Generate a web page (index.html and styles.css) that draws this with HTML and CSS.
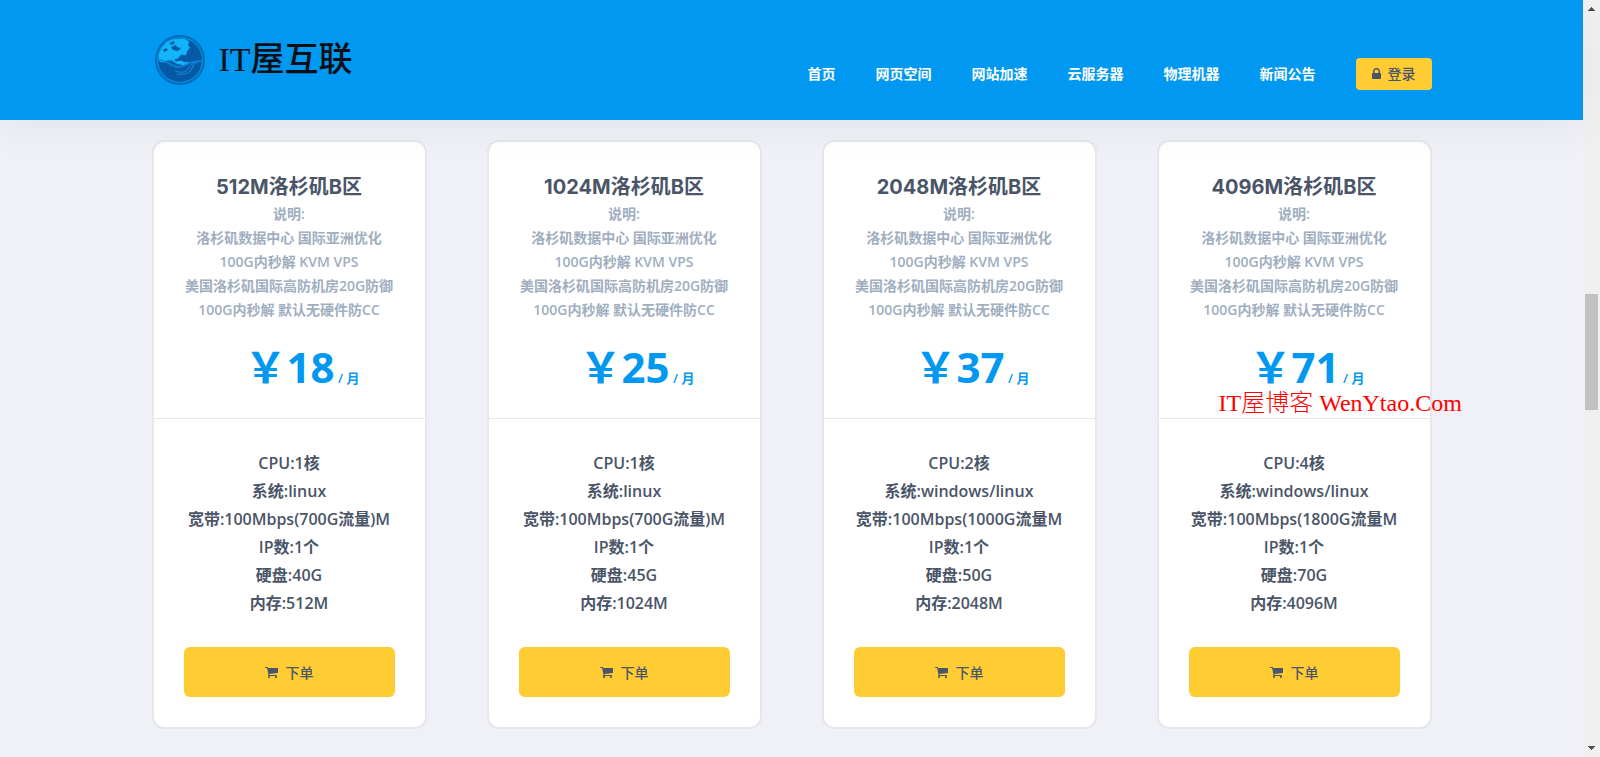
FILE: index.html
```html
<!DOCTYPE html>
<html lang="zh-CN">
<head>
    <meta charset="UTF-8">
    <meta name="viewport" content="width=device-width, initial-scale=1.0">
    <title>IT屋互联</title>
    <link rel="stylesheet" href="styles.css">
</head>
<body>
    <svg class="icon-defs" aria-hidden="true">
        <symbol id="icon-cart" viewBox="0 0 1664 1792">
            <path d="M640 1536q0 52-38 90t-90 38-90-38-38-90 38-90 90-38 90 38 38 90zm896 0q0 52-38 90t-90 38-90-38-38-90 38-90 90-38 90 38 38 90zm128-1088v512q0 24-16.500 42.500t-40.500 21.500l-1044 122q13 60 13 70 0 16-24 64h920q26 0 45 19t19 45-19 45-45 19h-1024q-26 0-45-19t-19-45q0-11 8-31.500t16-36 21.500-40 15.500-29.500l-177-823h-204q-26 0-45-19t-19-45 19-45 45-19h256q16 0 28.500 6.500t19.500 15.500 13 24.500 8 26 5.500 29.500 4.500 26h1201q26 0 45 19t19 45z"/>
        </symbol>
        <symbol id="icon-lock" viewBox="320 0 1152 1792">
            <path d="M640 768h512v-192q0-106-75-181t-181-75-181 75-75 181v192zm832 96v576q0 40-28 68t-68 28h-960q-40 0-68-28t-28-68v-576q0-40 28-68t68-28h32v-192q0-184 132-316t316-132 316 132 132 316v192h32q40 0 68 28t28 68z"/>
        </symbol>
    </svg>

    <div class="page">
        <header class="header">
            <div class="container header-inner">
                <a class="logo" href="#">
                    <svg class="logo-mark" viewBox="0 0 50 50" aria-hidden="true">
                        <circle cx="25" cy="25" r="24" fill="#0098f0" stroke="#0569b4" stroke-width="2"/>
                        <circle cx="25" cy="25" r="22" fill="#0559a5"/>
                        <path d="M3.500 23C4 13 12 5 20 4L29 3.500l5 3-1 4 2 2-3 4-1 4-5-1-3 4-4 1 2 2 5-1 4 2 3-1 1 2-4 2-5-1-4-1-4-3-5 0-4 2-4-1z" fill="#12b4fa"/>
                        <path d="M14 9l4-3 2 1-2 3zM8 15l3-2 2 2-4 2zM16 12l5-2 1 2 4 1-3 3-5-1z" fill="#0559a5"/>
                        <path d="M4 25c8 0 12 7 20 7 6 0 8-6 23-6" fill="none" stroke="#0c86dc" stroke-width="1.500"/>
                        <path d="M20 36c5 2 11 2 13-2 1-3 4-6 9-7M21 39c8 1 12 0 15-4 1-3 2-5 5-7M33 38c3-2 5-5 6-9" fill="none" stroke="#1689dc" stroke-width="1"/>
                    </svg>
                    <span class="logo-text">IT屋互联</span>
                </a>
                <nav class="nav">
                    <a href="#">首页</a>
                    <a href="#">网页空间</a>
                    <a href="#">网站加速</a>
                    <a href="#">云服务器</a>
                    <a href="#">物理机器</a>
                    <a href="#">新闻公告</a>
                    <a class="btn btn-login" href="#"><svg class="icon-lock"><use href="#icon-lock"/></svg>登录</a>
                </nav>
            </div>
        </header>

        <main class="container plans">
            <section class="card">
                <div class="card-head">
                    <h3>512M洛杉矶B区</h3>
                    <p>说明:<br>洛杉矶数据中心 国际亚洲优化<br>100G内秒解 KVM VPS<br>美国洛杉矶国际高防机房20G防御<br>100G内秒解 默认无硬件防CC</p>
                    <div class="price">￥18<span> / 月</span></div>
                </div>
                <div class="card-body">
                    <ul>
                        <li>CPU:1核</li>
                        <li>系统:linux</li>
                        <li>宽带:100Mbps(700G流量)M</li>
                        <li>IP数:1个</li>
                        <li>硬盘:40G</li>
                        <li>内存:512M</li>
                    </ul>
                    <button class="btn btn-order" type="button"><svg class="icon-cart"><use href="#icon-cart"/></svg>下单</button>
                </div>
            </section>

            <section class="card">
                <div class="card-head">
                    <h3>1024M洛杉矶B区</h3>
                    <p>说明:<br>洛杉矶数据中心 国际亚洲优化<br>100G内秒解 KVM VPS<br>美国洛杉矶国际高防机房20G防御<br>100G内秒解 默认无硬件防CC</p>
                    <div class="price">￥25<span> / 月</span></div>
                </div>
                <div class="card-body">
                    <ul>
                        <li>CPU:1核</li>
                        <li>系统:linux</li>
                        <li>宽带:100Mbps(700G流量)M</li>
                        <li>IP数:1个</li>
                        <li>硬盘:45G</li>
                        <li>内存:1024M</li>
                    </ul>
                    <button class="btn btn-order" type="button"><svg class="icon-cart"><use href="#icon-cart"/></svg>下单</button>
                </div>
            </section>

            <section class="card">
                <div class="card-head">
                    <h3>2048M洛杉矶B区</h3>
                    <p>说明:<br>洛杉矶数据中心 国际亚洲优化<br>100G内秒解 KVM VPS<br>美国洛杉矶国际高防机房20G防御<br>100G内秒解 默认无硬件防CC</p>
                    <div class="price">￥37<span> / 月</span></div>
                </div>
                <div class="card-body">
                    <ul>
                        <li>CPU:2核</li>
                        <li>系统:windows/linux</li>
                        <li>宽带:100Mbps(1000G流量M</li>
                        <li>IP数:1个</li>
                        <li>硬盘:50G</li>
                        <li>内存:2048M</li>
                    </ul>
                    <button class="btn btn-order" type="button"><svg class="icon-cart"><use href="#icon-cart"/></svg>下单</button>
                </div>
            </section>

            <section class="card">
                <div class="card-head">
                    <h3>4096M洛杉矶B区</h3>
                    <p>说明:<br>洛杉矶数据中心 国际亚洲优化<br>100G内秒解 KVM VPS<br>美国洛杉矶国际高防机房20G防御<br>100G内秒解 默认无硬件防CC</p>
                    <div class="price">￥71<span> / 月</span></div>
                    <div class="watermark">IT屋博客 WenYtao.Com</div>
                </div>
                <div class="card-body">
                    <ul>
                        <li>CPU:4核</li>
                        <li>系统:windows/linux</li>
                        <li>宽带:100Mbps(1800G流量M</li>
                        <li>IP数:1个</li>
                        <li>硬盘:70G</li>
                        <li>内存:4096M</li>
                    </ul>
                    <button class="btn btn-order" type="button"><svg class="icon-cart"><use href="#icon-cart"/></svg>下单</button>
                </div>
            </section>
        </main>
    </div>

    <div class="scrollbar" aria-hidden="true">
        <svg viewBox="0 0 7 4"><path d="M0 4V3h1V2h1V1h1V0h1v1h1v1h1v1h1v1z"/></svg>
        <div class="scrollbar-track"><div class="scrollbar-thumb"></div></div>
        <svg viewBox="0 0 7 4"><path d="M0 0v1h1v1h1v1h1v1h1V3h1V2h1V1h1V0z"/></svg>
    </div>
</body>
</html>
```
FILE: styles.css
```css
* {
    margin: 0;
    padding: 0;
    box-sizing: border-box;
}

body {
    display: flex;
    min-height: 100vh;
    background: #f0f1f6;
    color: #4a5568;
    font-family: 'Open Sans', 'Noto Sans CJK SC', sans-serif;
    font-size: 14px;
    font-weight: 600;
}

a {
    color: inherit;
    text-decoration: none;
}

.icon-defs {
    display: none;
}

.page {
    flex: 1;
    min-width: 0;
}

.container {
    width: 100%;
    max-width: 1340px;
    margin: 0 auto;
    padding: 0 30px;
}

/* Header */
.header {
    position: relative;
    z-index: 1;
    background: #0098f0;
    box-shadow: 0 10px 40px rgba(0, 0, 0, 0.05);
}

.header-inner {
    display: flex;
    align-items: center;
    justify-content: space-between;
    height: 120px;
}

.logo {
    display: flex;
    align-items: center;
    gap: 14px;
    padding-left: 3px;
}

.logo-mark {
    width: 50px;
    height: 50px;
}

.logo-text {
    color: #0a0f14;
    font-family: 'Liberation Serif', 'Noto Sans CJK SC', serif;
    font-size: 34px;
    font-weight: 500;
    line-height: 40px;
}

.nav {
    display: flex;
    align-items: center;
    gap: 40px;
    padding-top: 28px;
    color: #fff;
    font-weight: 700;
    line-height: 20px;
}

.btn {
    display: flex;
    align-items: center;
    justify-content: center;
    border: none;
    background: #ffcc33;
    color: #4a5568;
    font: inherit;
    font-weight: 500;
    cursor: pointer;
}

.btn svg {
    height: 14px;
    fill: currentColor;
}

.btn-login {
    gap: 7px;
    height: 32px;
    padding: 0 16px;
    border-radius: 4px;
}

.icon-lock {
    width: 9px;
}

.icon-cart {
    width: 13px;
}

/* Plans */
.plans {
    display: grid;
    grid-template-columns: repeat(4, 1fr);
    gap: 60px;
    padding-top: 20px;
    padding-bottom: 20px;
}

.card {
    border: 2px solid #e5e7ee;
    border-radius: 12px;
    background: #fff;
    text-align: center;
}

.card-head {
    position: relative;
    padding: 30px 0;
    border-bottom: 1px solid #e5e7ee;
}

.card-head h3 {
    font-family: 'Inter', 'Noto Sans CJK SC', sans-serif;
    font-size: 20px;
    font-weight: 700;
    line-height: 30px;
}

.card-head p {
    color: #a0aec0;
    line-height: 24px;
}

.price {
    margin-top: 24px;
    padding-left: 26px;
    color: #0098f0;
    font-size: 42px;
    font-weight: 700;
    line-height: 42px;
}

.price span {
    font-size: 13px;
    font-weight: 600;
    line-height: 13px;
}

.watermark {
    position: absolute;
    left: 60px;
    bottom: 0;
    color: #ff0000;
    font-family: 'Liberation Serif', 'Noto Sans CJK SC', serif;
    font-size: 24px;
    font-weight: 300;
    line-height: 30px;
    white-space: nowrap;
}

.card-body {
    padding: 30px;
}

.card-body ul {
    display: flex;
    flex-direction: column;
    align-items: center;
    list-style: none;
    font-size: 16px;
    line-height: 28px;
    white-space: nowrap;
}

.btn-order {
    gap: 8px;
    width: 100%;
    height: 50px;
    margin-top: 30px;
    border-radius: 6px;
}

/* Scrollbar */
.scrollbar {
    display: flex;
    flex-direction: column;
    align-items: center;
    width: 17px;
    padding: 7px 2px;
    background: #f0f0f0;
}

.scrollbar svg {
    width: 7px;
    height: 4px;
    fill: #505050;
}

.scrollbar-track {
    display: flex;
    flex: 1;
    flex-direction: column;
    width: 100%;
    padding-top: 283px;
}

.scrollbar-thumb {
    height: 116px;
    background: #c1c1c1;
}
```
